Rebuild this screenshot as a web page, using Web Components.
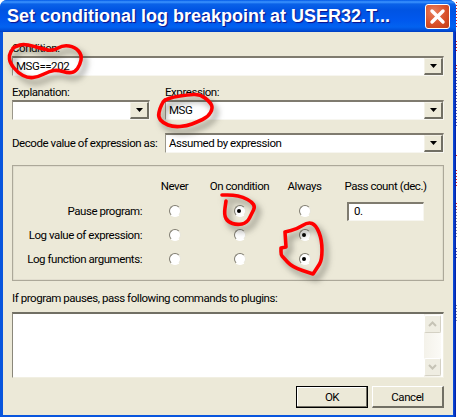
<!DOCTYPE html>
<html>
<head>
<meta charset="utf-8">
<title>Set conditional log breakpoint</title>
<style>
  html, body { margin: 0; padding: 0; background: #fff; }
  body { width: 457px; height: 417px; overflow: hidden; display: flex; font: 11.5px Roboto, "Liberation Sans", sans-serif; letter-spacing: -0.44px; color: #000; }
  .strip {
    width: 1px; height: 417px;
    background:
      linear-gradient(#fff 0 2px, transparent 2px) 0 0 / 1px 3px,
      linear-gradient(to bottom, #e02020 0 27px, #fff 27px 40px, #e02020 40px 53px, #fff 53px 65px, #e02020 65px 67px,
        #5a60c0 77px 127px, #fff 127px 155px, #e02020 155px 157px, #fff 157px 170px, #e02020 170px 187px,
        #fff 187px 203px, #e02020 203px 205px, #8088b0 213px 237px, #fff 237px 248px, #5a60c0 248px 260px, #fff 260px 305px, #8088b0 305px 323px, #fff 323px);
  }
</style>
</head>
<body>
<xp-window title-text="Set conditional log breakpoint at USER32.T...">
  <label-text>Condition:</label-text>
  <xp-combo value="MSG==202"></xp-combo>

  <two-col style="margin-top:8px">
    <div><label-text>Explanation:</label-text><xp-combo></xp-combo></div>
    <div><label-text>Expression:</label-text><xp-combo value="MSG"></xp-combo></div>
  </two-col>

  <two-col style="margin-top:13px">
    <label-text style="align-self:center;white-space:nowrap">Decode value of expression as:</label-text>
    <xp-combo value="Assumed by expression"></xp-combo>
  </two-col>

  <action-group style="margin-top:12px"></action-group>

  <label-text style="margin-top:9px">If program pauses, pass following commands to plugins:</label-text>
  <xp-memo style="margin-top:6px"></xp-memo>

  <button-row style="margin-top:8px">
    <xp-button default>OK</xp-button>
    <xp-button>Cancel</xp-button>
  </button-row>
</xp-window>
<div class="strip"></div>
<ink-marks></ink-marks>

<script>
class XpWindow extends HTMLElement {
  constructor() {
    super();
    this.attachShadow({ mode: 'open' });
  }
  connectedCallback() {
    this.shadowRoot.innerHTML = `
    <style>
      :host { display: flex; flex-direction: column; width: 456px; height: 417px; box-sizing: border-box;
        background: linear-gradient(to right, #0855dd 0 453px, #0a3fd0 454px, #001ea0 456px); border-radius: 7px 7px 0 0; overflow: hidden; }
      header { height: 32px; flex: none; box-sizing: border-box; display: flex; align-items: center; justify-content: space-between;
        padding: 0 6px 0 7px;
        background: linear-gradient(to bottom, #0058e6 0, #3d95ff 2px, #0a62e8 4px, #0054e3 10px, #0058ee 20px, #0262f0 27px, #0051dc 30px, #003dc0 32px); }
      h1 { margin: 0; font: bold 18px "Liberation Sans", sans-serif; letter-spacing: 0; color: #fff; text-shadow: 1px 1px 1px #0f1089; white-space: nowrap; }
      .close { width: 25px; height: 25px; box-sizing: border-box; border: 1px solid #fff; border-radius: 3px;
        background: radial-gradient(circle at 35% 30%, #e8805f, #d9512a 55%, #c03c14); display: block; }
      .close svg { display: block; }
      main { flex: 1; display: flex; flex-direction: column; box-sizing: border-box; background: #ece9d8;
        margin: 0 3px 2px 3px; padding: 8px 9px 0 9px; }
    </style>
    <header>
      <h1>${this.getAttribute('title-text')}</h1>
      <span class="close"><svg width="23" height="23" viewBox="0 0 23 23"><path d="M6 6L17 17M17 6L6 17" stroke="#fff" stroke-width="3.4" stroke-linecap="round"/></svg></span>
    </header>
    <main><slot></slot></main>`;
  }
}

class LabelText extends HTMLElement {
  constructor() {
    super();
    this.attachShadow({ mode: 'open' }).innerHTML = `
    <style>:host { display: block; height: 16px; line-height: 16px; }</style><slot></slot>`;
  }
}

class TwoCol extends HTMLElement {
  constructor() {
    super();
    this.attachShadow({ mode: 'open' }).innerHTML = `
    <style>:host { display: grid; grid-template-columns: 138px 1fr; column-gap: 15px; }</style><slot></slot>`;
  }
}

const arrowSvg = `<svg width="7" height="4" viewBox="0 0 7 4"><path d="M0 0H7L3.5 4Z" fill="#000"/></svg>`;

class XpCombo extends HTMLElement {
  constructor() {
    super();
    this.attachShadow({ mode: 'open' });
  }
  connectedCallback() {
    this.shadowRoot.innerHTML = `
    <style>
      :host { display: flex; height: 20px; box-sizing: border-box; background: #fff;
        border-top: 2px solid #7f7b6f; border-left: 1px solid #9a978a; border-bottom: 1px solid #f7f6f0; border-right: 1px solid #f7f6f0; }
      .val { flex: 1; padding-left: 3px; line-height: 16px; white-space: nowrap; overflow: hidden; }
      .btn { width: 19px; flex: none; display: flex; align-items: center; justify-content: center; box-sizing: border-box; background: #ece9d8;
        border-top: 1px solid #f4f2e8; border-left: 1px solid #f4f2e8; border-right: 2px solid #716f64; border-bottom: 2px solid #716f64; }
    </style>
    <span class="val">${this.getAttribute('value') || ''}</span>
    <span class="btn">${arrowSvg}</span>`;
  }
}

class XpRadio extends HTMLElement {
  constructor() {
    super();
    this.attachShadow({ mode: 'open' }).innerHTML = `
    <style>
      :host { display: block; width: 12px; height: 12px; border-radius: 50%; box-sizing: border-box; position: relative;
        background: #fff; border: 1.5px solid; border-color: #7f7c70 #e8e6da #fff #7f7c70; }
      :host([checked])::after { content: ""; position: absolute; left: 2.500px; top: 2.500px; width: 4px; height: 4px; border-radius: 50%; background: #000; }
    </style>`;
  }
}

class ActionGroup extends HTMLElement {
  constructor() {
    super();
    this.attachShadow({ mode: 'open' });
  }
  connectedCallback() {
    const rows = [
      ['Pause program:', 0, 1, 0],
      ['Log value of expression:', 0, 0, 1],
      ['Log function arguments:', 0, 0, 1],
    ];
    const cells = rows.map(([name, ...states], i) =>
      `<span class="name">${name}</span>` +
      states.map(on => `<span class="r"><xp-radio ${on ? 'checked' : ''}></xp-radio></span>`).join('') +
      (i === 0 ? '<xp-count class="last">0.</xp-count>' : '')
    ).join('');
    this.shadowRoot.innerHTML = `
    <style>
      :host { display: grid; box-sizing: border-box; height: 116px; border: 1px solid #aca899; box-shadow: inset 0 0 0 .5px #d5d2c4;
        padding: 12px 0 9px 0; grid-template-columns: 129px 65px 65px 65px 10px 77px; grid-template-rows: 21px 24px 24px 24px; align-items: center; }
      .h { text-align: center; white-space: nowrap; justify-self: center; align-self: start; line-height: 16px; }
      .name { grid-column: 1; text-align: right; white-space: nowrap; }
      .r { display: flex; justify-content: center; }
      .last { grid-column: 6; }
    </style>
    <span></span><span class="h">Never</span><span class="h">On condition</span><span class="h">Always</span>
    <span class="h last">Pass count (dec.)</span>
    ${cells}`;
  }
}

class XpCount extends HTMLElement {
  constructor() {
    super();
    this.attachShadow({ mode: 'open' }).innerHTML = `
    <style>
      :host { display: block; height: 19px; box-sizing: border-box; background: #fff; padding-left: 5px; line-height: 15px;
        border-top: 2px solid #7f7b6f; border-left: 2px solid #7f7b6f; border-bottom: 1px solid #f7f6f0; border-right: 1px solid #f7f6f0; }
    </style><slot></slot>`;
  }
}

class XpMemo extends HTMLElement {
  constructor() {
    super();
    this.attachShadow({ mode: 'open' }).innerHTML = `
    <style>
      :host { display: flex; justify-content: flex-end; height: 66px; box-sizing: border-box; background: #fff;
        border-top: 2px solid #716f64; border-left: 1px solid #8a877a; border-bottom: 1px solid #f1efe2; border-right: 1px solid #f1efe2; }
      .bar { width: 17px; margin-right: 2px; display: flex; flex-direction: column; justify-content: space-between; padding: 1px 0; box-sizing: border-box;
        background: linear-gradient(to right, #f4f2ea, #fbfaf6); }
      .b { height: 18px; box-sizing: border-box; display: flex; align-items: center; justify-content: center; background: #efede2;
        border: 1px solid #fff; border-right-color: #d4d1c4; border-bottom-color: #d4d1c4; border-radius: 2px; }
    </style>
    <div class="bar">
      <span class="b"><svg width="9" height="6" viewBox="0 0 9 6"><path d="M1 5L4.500 1.500L8 5" fill="none" stroke="#c6c3b6" stroke-width="2"/></svg></span>
      <span class="b"><svg width="9" height="6" viewBox="0 0 9 6"><path d="M1 1L4.500 4.500L8 1" fill="none" stroke="#c6c3b6" stroke-width="2"/></svg></span>
    </div>`;
  }
}

class ButtonRow extends HTMLElement {
  constructor() {
    super();
    this.attachShadow({ mode: 'open' }).innerHTML = `
    <style>:host { display: flex; justify-content: flex-end; gap: 4px; }</style><slot></slot>`;
  }
}

class XpButton extends HTMLElement {
  constructor() {
    super();
    this.attachShadow({ mode: 'open' }).innerHTML = `
    <style>
      :host { display: flex; align-items: center; justify-content: center; width: 72px; height: 22px; box-sizing: border-box; background: #ece9d8;
        border-top: 1px solid #fff; border-left: 1px solid #fff; border-right: 2px solid #716f64; border-bottom: 2px solid #716f64; }
      :host([default]) { border: 1px solid #000; box-shadow: inset -1px -1px 0 #716f64, inset 1px 1px 0 #fff; }
    </style><slot></slot>`;
  }
}

// hand drawn red circles on top of the dialog
class InkMarks extends HTMLElement {
  constructor() {
    super();
    this.attachShadow({ mode: 'open' });
  }
  smooth(pts) {
    const mid = (a, b) => [(a[0] + b[0]) / 2, (a[1] + b[1]) / 2];
    let m = mid(pts[0], pts[1]);
    let d = `M${pts[0]} L${m}`;
    for (let i = 1; i < pts.length - 1; i++) {
      m = mid(pts[i], pts[i + 1]);
      d += ` Q${pts[i]} ${m}`;
    }
    return d + ` L${pts[pts.length - 1]}`;
  }
  connectedCallback() {
    const marks = [
      [[13,48],[17,46],[23,44],[33,46],[43,49],[53,51],[63,45],[75,47],[82,55],[80,65],[75,72],[68,73],[58,70],[50,71],[38,77],[28,78],[18,73],[10,63],[9,55],[13,48],[17,46]],
      [[163,102],[165,100],[173,97],[187,95],[200,94],[210,102],[213,108],[208,117],[197,122],[187,126],[173,127],[163,123],[158,117],[160,108],[163,102],[165,100]],
      [[222,195],[233,195],[243,197],[252,202],[255,207],[252,213],[247,223],[237,225],[228,222],[224,215],[226,201]],
      [[285,232],[285,232],[297,229],[308,222],[316,225],[322,240],[322,260],[317,268],[313,274],[313,274],[292,267],[283,257],[281,255],[281,248],[281,248],[286,247],[286,247],[285,232],[285,232]],
    ];
    this.shadowRoot.innerHTML = `
    <style>
      :host { position: absolute; left: 0; top: 0; width: 457px; height: 417px; pointer-events: none; }
      svg { display: block; filter: drop-shadow(4px 5px 3px rgba(50,50,40,.55)); }
      path { fill: none; stroke: #f00; stroke-width: 3.6; stroke-linejoin: round; stroke-linecap: round; }
    </style>
    <svg width="457" height="417">${marks.map(p => `<path d="${this.smooth(p)}"/>`).join('')}</svg>`;
  }
}

customElements.define('xp-window', XpWindow);
customElements.define('label-text', LabelText);
customElements.define('two-col', TwoCol);
customElements.define('xp-combo', XpCombo);
customElements.define('xp-radio', XpRadio);
customElements.define('action-group', ActionGroup);
customElements.define('xp-count', XpCount);
customElements.define('xp-memo', XpMemo);
customElements.define('button-row', ButtonRow);
customElements.define('xp-button', XpButton);
customElements.define('ink-marks', InkMarks);
</script>
</body>
</html>
